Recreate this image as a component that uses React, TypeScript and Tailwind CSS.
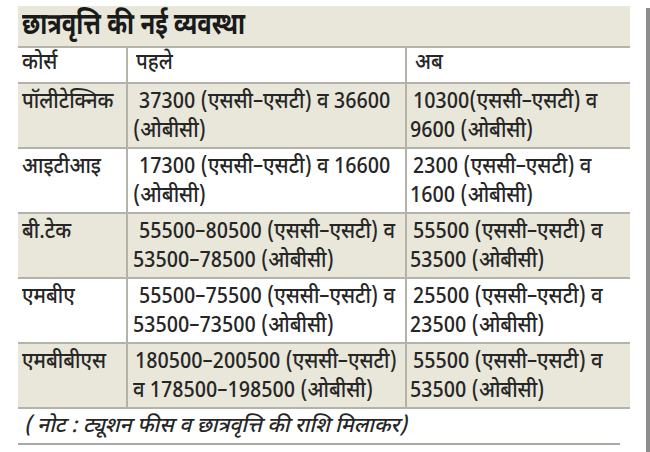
const rows = [
  {
    course: "पॉलीटेक्निक",
    before: ["37300 (एससी–एसटी) व 36600", "(ओबीसी)"],
    after: ["10300(एससी–एसटी) व", "9600 (ओबीसी)"],
    shaded: true,
    indent: true,
  },
  {
    course: "आइटीआइ",
    before: ["17300 (एससी–एसटी) व 16600", "(ओबीसी)"],
    after: ["2300 (एससी–एसटी) व", "1600 (ओबीसी)"],
    shaded: false,
    indent: true,
  },
  {
    course: "बी.टेक",
    before: ["55500–80500 (एससी–एसटी) व", "53500–78500 (ओबीसी)"],
    after: ["55500 (एससी–एसटी) व", "53500 (ओबीसी)"],
    shaded: true,
    indent: true,
  },
  {
    course: "एमबीए",
    before: ["55500–75500 (एससी–एसटी) व", "53500–73500 (ओबीसी)"],
    after: ["25500 (एससी–एसटी) व", "23500 (ओबीसी)"],
    shaded: false,
    indent: true,
  },
  {
    course: "एमबीबीएस",
    before: ["180500–200500 (एससी–एसटी)", "व 178500–198500 (ओबीसी)"],
    after: ["55500 (एससी–एसटी) व", "53500 (ओबीसी)"],
    shaded: true,
    indent: false,
  },
];

// condensed newspaper look: squeeze text horizontally
function Line({ text, className = "" }: { text: string; className?: string }) {
  return (
    <div className={`whitespace-nowrap ${className}`}>
      <span className="inline-block origin-left scale-x-[0.92]">{text}</span>
    </div>
  );
}

export default function App() {
  return (
    <div className="flex h-[452px] w-[650px] bg-white font-['Noto_Sans_Devanagari','Lohit_Devanagari','Noto_Sans',sans-serif] font-medium text-[#262626]">
      <div className="ml-[18px] mt-[6px] flex w-[612px] flex-col">
        <div className="h-[42px] whitespace-nowrap border-b-2 border-[#b4b3aa] bg-[#e8e7da] pl-1 text-[30px] font-bold leading-[42px] text-[#1a1a1a]">
          <span className="inline-block origin-left scale-x-[0.8]">छात्रवृत्ति की नई व्यवस्था</span>
        </div>
        <div className="grid h-[34px] grid-cols-[110px_279px_223px] text-[22px] leading-[32px]">
          <Line text="कोर्स" className="border-r-2 border-[#b4b3aa] pl-1" />
          <Line text="पहले" className="border-r-2 border-[#b4b3aa] pl-2" />
          <Line text="अब" className="pl-2" />
        </div>
        {rows.map((r) => (
          <div
            key={r.course}
            className={`grid h-[65px] grid-cols-[110px_279px_223px] border-t-2 border-[#b4b3aa] text-[22px] leading-[29px] ${
              r.shaded ? "bg-[#e8e7da]" : "bg-white"
            }`}
          >
            <div className="border-r-2 border-[#b4b3aa] pl-1 pt-1">
              <Line text={r.course} />
            </div>
            <div className="border-r-2 border-[#b4b3aa] pl-[5px] pt-1">
              <Line text={r.before[0]} className={r.indent ? "pl-[6px]" : "pl-[2px]"} />
              <Line text={r.before[1]} />
            </div>
            <div className="pl-[3px] pt-1">
              <Line text={r.after[0]} className="pl-[3px]" />
              <Line text={r.after[1]} />
            </div>
          </div>
        ))}
        <div className="border-t-2 border-[#b4b3aa]" />
        <div className="mt-[4px] w-[602px] whitespace-nowrap border-b-2 border-[#a9a9a2] pb-[2px] pl-[6px] text-[21px] italic leading-[28px]">
          ( नोट : ट्यूशन फीस व छात्रवृत्ति की राशि मिलाकर)
        </div>
      </div>
      <div className="ml-auto mt-[8px] w-[4px] bg-[#8d8d8d]" />
    </div>
  );
}
